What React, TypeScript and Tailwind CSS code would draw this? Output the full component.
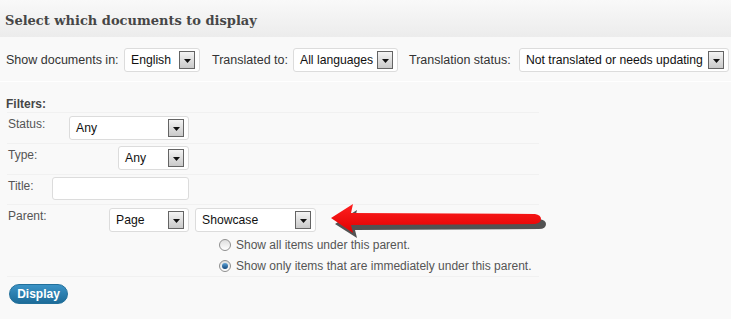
import React from "react";

function Caret() {
  return (
    <svg width="7" height="4" viewBox="0 0 7 4" className="block">
      <path d="M0 0 H7 L3.5 4 Z" fill="#111" />
    </svg>
  );
}

function Select({ w, text }: { w: number; text: string }) {
  return (
    <div
      className="relative h-[24px] shrink-0 rounded-[3px] border border-[#dcdcdc] bg-white flex items-center overflow-hidden"
      style={{ width: w }}
    >
      <span className="pl-[6px] text-[12.2px] text-[#111] leading-none whitespace-nowrap">{text}</span>
      <div className="absolute right-[4px] top-[2px] w-[16px] h-[18px] border border-[#646464] bg-gradient-to-b from-[#f4f4f4] to-[#c9c9c9] flex items-center justify-center pt-[2px]">
        <Caret />
      </div>
    </div>
  );
}

function Radio({ checked }: { checked?: boolean }) {
  return (
    <div className="w-[12px] h-[12px] rounded-full border border-[#8f8f8f] bg-gradient-to-b from-[#dedede] to-[#ffffff] flex items-center justify-center shrink-0">
      {checked && (
        <div className="w-[6px] h-[6px] rounded-full bg-gradient-to-b from-[#5fa4d8] to-[#10467a]" />
      )}
    </div>
  );
}

export default function App() {
  const labelFont = { fontFamily: '"Liberation Sans", Arial, sans-serif' };
  return (
    <div className="w-[731px] h-[319px] bg-[#f9f9f9] overflow-hidden relative" style={labelFont}>
      <div className="h-[37px] bg-gradient-to-b from-[#f9f9f9] to-[#ececec] flex items-center pl-[5px] pt-[3px]">
        <span
          className="text-[13px] font-bold text-[#464646] leading-none"
          style={{ fontFamily: '"DejaVu Serif", Georgia, serif' }}
        >
          Select which documents to display
        </span>
      </div>

      <div className="h-[44px] pt-[11px] flex items-start pl-[6px]">
        <div className="h-[24px] flex items-center">
          <span className="w-[118px] text-[12.5px] text-[#333] whitespace-nowrap">Show documents in:</span>
          <Select w={76} text="English" />
          <span className="w-[93px] pl-[12px] text-[12.5px] text-[#333] whitespace-nowrap">Translated to:</span>
          <Select w={105} text="All languages" />
          <span className="w-[121px] pl-[11px] text-[12.5px] text-[#333] whitespace-nowrap">Translation status:</span>
          <Select w={210} text="Not translated or needs updating" />
        </div>
      </div>

      <div className="border-t border-white">
        <div className="pt-[9px] pl-[6px] h-[30px]">
          <span className="text-[12px] font-bold text-[#464646] leading-[14px]">Filters:</span>
        </div>
        <div className="w-[532px] ml-[7px] text-[12px] text-[#555]">
          <div className="h-[31px] border-t border-[#f1f1f1] flex items-start">
            <div className="w-[62px] pl-[1px] pt-[4px] leading-[14px]">Status:</div>
            <div className="pt-[3px]"><Select w={120} text="Any" /></div>
          </div>
          <div className="h-[31px] border-t border-[#f1f1f1] flex items-start">
            <div className="w-[111px] pl-[1px] pt-[4px] leading-[14px]">Type:</div>
            <div className="pt-[2px]"><Select w={71} text="Any" /></div>
          </div>
          <div className="h-[30px] border-t border-[#f1f1f1] flex items-start">
            <div className="w-[45px] pl-[1px] pt-[4px] leading-[14px]">Title:</div>
            <div className="pt-[2px]">
              <div className="w-[137px] h-[23px] rounded-[3px] border border-[#dcdcdc] bg-white" />
            </div>
          </div>
          <div className="h-[73px] border-t border-b border-[#f1f1f1] flex items-start">
            <div className="w-[102px] pl-[1px] pt-[4px] leading-[14px]">Parent:</div>
            <div className="pt-[3px] flex flex-col">
              <div className="flex gap-[6px]">
                <Select w={80} text="Page" />
                <Select w={121} text="Showcase" />
              </div>
              <div className="pl-[110px] pt-[6px] flex flex-col gap-[8px]">
                <div className="flex items-center gap-[5px] h-[13px]">
                  <Radio />
                  <span className="whitespace-nowrap leading-none">Show all items under this parent.</span>
                </div>
                <div className="flex items-center gap-[5px] h-[13px]">
                  <Radio checked />
                  <span className="whitespace-nowrap leading-none">Show only items that are immediately under this parent.</span>
                </div>
              </div>
            </div>
          </div>
        </div>
        <div className="pl-[9px] pt-[7px]">
          <div className="w-[59px] h-[20px] rounded-full bg-gradient-to-b from-[#3b93c6] to-[#1d6c99] border border-[#22709b] flex items-center justify-center">
            <span className="text-[12px] font-bold text-white leading-none">Display</span>
          </div>
        </div>
      </div>

      <svg className="absolute left-[325px] top-[198px]" width="225" height="45" viewBox="0 0 225 45">
        <defs>
          <linearGradient id="ag" x1="0" y1="0" x2="0" y2="1">
            <stop offset="0" stopColor="#ff2020" />
            <stop offset="1" stopColor="#e00000" />
          </linearGradient>
        </defs>
        <path
          d="M8 23 L30 9 L28 17 L212 18 Q219 19 219 23 Q219 28 212 28 L28 29 L30 37 Z"
          fill="#1a1a1a"
          opacity="0.75"
          transform="translate(2 3)"
        />
        <path
          d="M6 20 L28 6 L26 15 L210 16 Q216 17 216 21 Q216 25 210 26 L26 27 L28 35 Z"
          fill="url(#ag)"
        />
      </svg>
    </div>
  );
}
